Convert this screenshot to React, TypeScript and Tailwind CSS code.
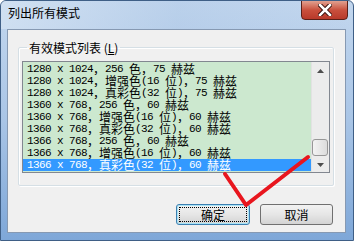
const modes = [
  '1280 x 1024，256 色，75 赫兹',
  '1280 x 1024，增强色(16 位)，75 赫兹',
  '1280 x 1024，真彩色(32 位)，75 赫兹',
  '1360 x 768，256 色，60 赫兹',
  '1360 x 768，增强色(16 位)，60 赫兹',
  '1360 x 768，真彩色(32 位)，60 赫兹',
  '1366 x 768，256 色，60 赫兹',
  '1366 x 768，增强色(16 位)，60 赫兹',
  '1366 x 768，真彩色(32 位)，60 赫兹',
];

// fixed cells like the old bitmap font: ascii 6px, cjk 12px
function ModeRow({ text, selected }: { text: string; selected?: boolean }) {
  return (
    <div
      className={
        'h-[12px] flex items-center overflow-hidden pl-[4px] whitespace-pre ' +
        (selected ? 'bg-[#3399ff] text-white' : 'text-black')
      }
    >
      {Array.from(text).map((ch, i) =>
        ch.charCodeAt(0) < 128 ? (
          <span
            key={i}
            className="shrink-0 w-[6px] h-[12px] leading-[12px] text-center font-['Liberation_Mono',monospace] text-[11px]"
          >
            {ch}
          </span>
        ) : (
          <span
            key={i}
            className={
              'shrink-0 w-[12px] h-[12px] leading-[12px] font-["Noto_Sans_CJK_SC",sans-serif] text-[12px] ' +
              (ch === '，' ? 'text-left' : 'text-center')
            }
          >
            {ch}
          </span>
        )
      )}
    </div>
  );
}

function ScrollBar() {
  return (
    <div className="w-[18px] flex flex-col bg-[#ececec] border-l border-[#e2e2e2]">
      <div className="h-[18px] flex items-center justify-center">
        <svg width="7" height="4" viewBox="0 0 7 4">
          <path d="M3.5 0 L7 4 L0 4 Z" fill="#4d4d4d" />
        </svg>
      </div>
      <div className="flex-1 flex flex-col justify-end">
        <div className="h-[17px] w-[16px] rounded-[3px] border border-[#979797] bg-gradient-to-r from-[#f3f3f3] to-[#dcdcdc]" />
        <div className="h-[1px]" />
      </div>
      <div className="h-[15px] flex items-center justify-center">
        <svg width="7" height="4" viewBox="0 0 7 4">
          <path d="M0 0 L7 0 L3.5 4 Z" fill="#4d4d4d" />
        </svg>
      </div>
    </div>
  );
}

function DlgButton({ label, focused }: { label: string; focused?: boolean }) {
  return (
    <button
      className={
        'h-[21px] rounded-[3px] border bg-gradient-to-b from-[#f2f2f2] via-[#e6e6e6] to-[#d3d3d3] text-[12px] text-black font-["Noto_Sans_CJK_SC",sans-serif] p-[2px] ' +
        (focused ? 'w-[74px] border-[#3c7fb1] shadow-[inset_0_0_0_1px_#a8e4f7]' : 'w-[73px] border-[#707070]')
      }
    >
      <div
        className={
          'h-full flex items-center justify-center leading-none ' +
          (focused ? 'outline-1 outline-dotted outline-black -outline-offset-1' : '')
        }
      >
        {label}
      </div>
    </button>
  );
}

export default function App() {
  return (
    <div className="relative w-[354px] h-[241px] flex flex-col rounded-t-[6px] border border-[#3f5f86] bg-gradient-to-b from-[#c3d7ee] via-[#a9c5e6] to-[#7ea7d8] font-['Noto_Sans_CJK_SC',sans-serif] overflow-hidden">
      {/* title bar */}
      <div className="h-[28px] flex items-start justify-between pl-[7px] pr-[5px] bg-gradient-to-r from-[#d6e4f3]/70 via-[#a8c3e4]/30 to-transparent">
        <span className="mt-[4px] text-[12px] text-black leading-[16px]">列出所有模式</span>
        <div className="w-[47px] h-[20px] -mt-[1px] rounded-b-[4px] border border-[#5a2018] bg-gradient-to-b from-[#e0a090] via-[#c9503d] to-[#b8392a] flex items-center justify-center">
          <svg width="14" height="12" viewBox="0 0 14 12">
            <path d="M2 1 L12 11 M12 1 L2 11" stroke="#3a1410" strokeWidth="4.5" strokeLinecap="square" />
            <path d="M2 1 L12 11 M12 1 L2 11" stroke="#ffffff" strokeWidth="2.5" strokeLinecap="square" />
          </svg>
        </div>
      </div>

      {/* client area */}
      <div className="flex-1 ml-[6px] mr-[7px] mb-[7px] border border-[#8699b2] bg-[#f0f0f0] flex flex-col">
        <fieldset className="mt-[10px] ml-[10px] mr-[11px] h-[146px] border border-[#d5dfe5] rounded-[2px] px-[3px] pb-[12px] shadow-[inset_1px_1px_0_#ffffff,1px_1px_0_#ffffff]">
          <legend className="ml-[5px] px-[2px] text-[12px] leading-[15px] text-black">
            有效模式列表 (<span className="underline">L</span>)
          </legend>
          <div className="mt-[6px] h-[112px] border border-[#828790] bg-[#cce8cf] flex">
            <div className="flex-1 py-[1px] overflow-hidden">
              {modes.map((m, i) => (
                <ModeRow key={m} text={m} selected={i === modes.length - 1} />
              ))}
            </div>
            <ScrollBar />
          </div>
        </fieldset>

        <div className="mt-[18px] mr-[12px] flex justify-end gap-[10px]">
          <DlgButton label="确定" focused />
          <DlgButton label="取消" />
        </div>
      </div>

      {/* red check mark annotation */}
      <svg className="absolute left-0 top-0 pointer-events-none" width="354" height="241">
        <polyline
          points="224,173 245,204 307,156"
          fill="none"
          stroke="#e8161e"
          strokeWidth="4"
          strokeLinecap="round"
          strokeLinejoin="round"
        />
      </svg>
    </div>
  );
}
